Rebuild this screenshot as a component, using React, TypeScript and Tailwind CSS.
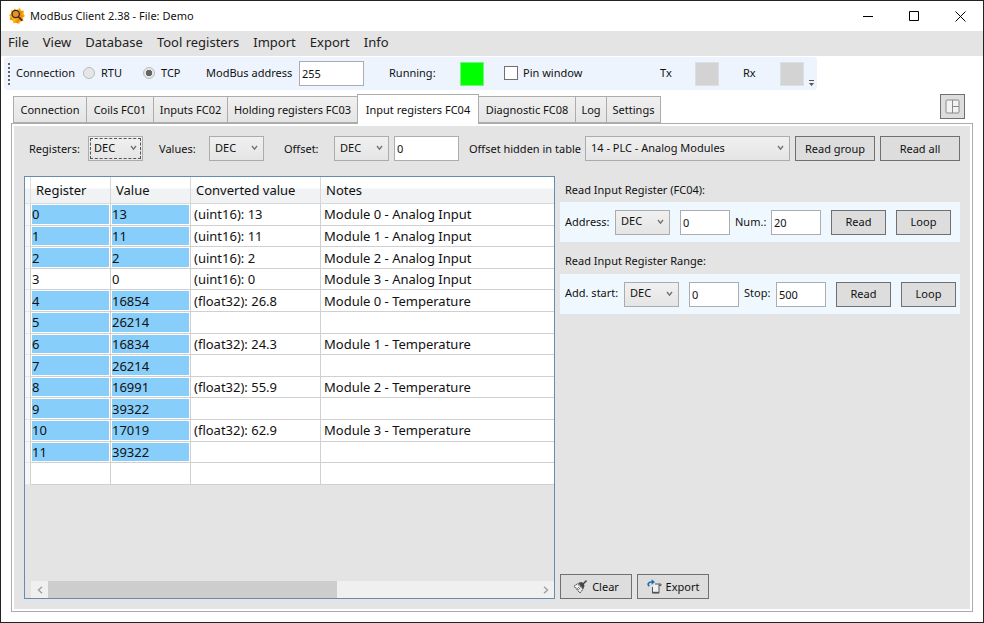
import type { ReactNode } from "react";

const MENU = ["File", "View", "Database", "Tool registers", "Import", "Export", "Info"];

const TABS = [
  { label: "Connection", width: "w-[74px]" },
  { label: "Coils FC01", width: "w-[68px]" },
  { label: "Inputs FC02", width: "w-[75px]" },
  { label: "Holding registers FC03", width: "w-[131px]" },
  { label: "Input registers FC04", width: "w-[122px]" },
  { label: "Diagnostic FC08", width: "w-[98px]" },
  { label: "Log", width: "w-[32px]" },
  { label: "Settings", width: "w-[55px]" },
];
const ACTIVE_TAB = "Input registers FC04";

type Row = { reg: string; value: string; converted?: string; notes?: string; changed: boolean };

const ROWS: Row[] = [
  { reg: "0", value: "13", converted: "(uint16): 13", notes: "Module 0 - Analog Input", changed: true },
  { reg: "1", value: "11", converted: "(uint16): 11", notes: "Module 1 - Analog Input", changed: true },
  { reg: "2", value: "2", converted: "(uint16): 2", notes: "Module 2 - Analog Input", changed: true },
  { reg: "3", value: "0", converted: "(uint16): 0", notes: "Module 3 - Analog Input", changed: false },
  { reg: "4", value: "16854", converted: "(float32): 26.8", notes: "Module 0 - Temperature", changed: true },
  { reg: "5", value: "26214", changed: true },
  { reg: "6", value: "16834", converted: "(float32): 24.3", notes: "Module 1 - Temperature", changed: true },
  { reg: "7", value: "26214", changed: true },
  { reg: "8", value: "16991", converted: "(float32): 55.9", notes: "Module 2 - Temperature", changed: true },
  { reg: "9", value: "39322", changed: true },
  { reg: "10", value: "17019", converted: "(float32): 62.9", notes: "Module 3 - Temperature", changed: true },
  { reg: "11", value: "39322", changed: true },
  { reg: "\u00a0", value: "", changed: false },
];

function Combo({ id, label, value, options, className = "w-[55px] shrink-0", focused = false }: {
  id: string; label?: string; value: string; options: string[]; className?: string; focused?: boolean;
}) {
  const ring = focused ? "outline outline-1 outline-dashed outline-[#555] -outline-offset-[3px]" : "outline-none";
  return (
    <div className={`relative h-[25px] ${className}`}>
      <select
        id={id}
        aria-label={label}
        defaultValue={value}
        className={`block h-full w-full appearance-none border border-[#acacac] bg-linear-to-b from-[#f0f0f0] to-[#e5e5e5] pb-0.5 pl-[5px] pr-4 ${ring}`}
      >
        {options.map((o) => <option key={o}>{o}</option>)}
      </select>
      <svg className="pointer-events-none absolute right-1.5 top-[9px]" width="7" height="6" viewBox="0 0 7 6" fill="none" stroke="#707070" strokeWidth="1.3">
        <path d="M1 1 3.5 4.2 6 1" />
      </svg>
    </div>
  );
}

function Field({ id, label, value, className = "w-[50px]" }: { id: string; label?: string; value: string; className?: string }) {
  return (
    <input
      id={id}
      aria-label={label}
      type="text"
      defaultValue={value}
      className={`h-[25px] shrink-0 border border-[#abadb3] bg-white px-0.5 outline-none ${className}`}
    />
  );
}

function Btn({ children, className = "w-[55px]" }: { children: ReactNode; className?: string }) {
  return (
    <button type="button" className={`flex h-[25px] shrink-0 items-center justify-center border border-[#707070] bg-[#dddddd] ${className}`}>
      {children}
    </button>
  );
}

function AppIcon() {
  return (
    <svg width="16" height="16" viewBox="0 0 16 16">
      <path fill="#fbb313" d="M5 .6 7.6 2 11 0l1 2.6 3 .2-.4 3L16 8l-2 1.800.6 3-3 .6L10 16l-2.400-1.400L4.500 15.600 3.800 12.600.6 12l1-2.800L0 7l2.300-1.600L2 2.300l2.800.2Z" />
      <path fill="#f58a0b" d="m10 .8 1 2 3 .4-1 3 2 2-2.500 1.500.5 3-3 .3-1.500 2.500L6 14l5-6ZM.8 9 3 10l1 2-3-.5Z" />
      <circle cx="6.700" cy="6" r="3.700" fill="#e8912b" stroke="#3a2c22" strokeWidth="1.300" />
      <path d="m9.300 8.600 4 4" stroke="#3a2c22" strokeWidth="1.600" />
    </svg>
  );
}

function BroomIcon() {
  return (
    <svg width="15" height="14" viewBox="0 0 15 14" fill="none" stroke="#454545">
      <path d="M1 6.200 4.300 3.800 10 9.200 7 13Z" fill="#f3f3f3" strokeWidth="1" strokeDasharray="2 .6" />
      <path d="M5 3 8.500 2l2.200 1.500.8 2.300-1.200 3.200Z" fill="#454545" stroke="none" />
      <path d="M10 4 13.500.6" strokeWidth="1.500" />
      <path d="m5.200 7.200 2 2M3.600 7.800l2.200 2.400" strokeWidth=".8" />
    </svg>
  );
}

function ExportIcon() {
  return (
    <svg width="15" height="15" viewBox="0 0 15 15" fill="none">
      <path d="M5.500 8V14h6.500V6.500h2v-1.500H8M12 6.500V5" fill="#f1f1f1" stroke="#555" strokeWidth="1" />
      <path d="M5 13.500h7" stroke="#555" strokeWidth="1.400" />
      <path d="M2.200 7.200C.4 5.500 1 2.800 5 3" stroke="#1f6cab" strokeWidth="1.700" />
      <path d="M4.600.3 8 3 4.600 5.800Z" fill="#1f6cab" />
    </svg>
  );
}

export default function App() {
  return (
    <div className="flex h-screen min-w-[960px] flex-col border border-[#222] bg-white font-['Noto_Sans','Open_Sans',sans-serif] text-[11px] leading-4 text-[#111]">
      <header className="flex h-[30px] shrink-0 items-center pl-2">
        <AppIcon />
        <h1 className="ml-[5px] flex-1">ModBus Client 2.38 - File: Demo</h1>
        <button type="button" aria-label="Minimize" className="flex h-full w-[46px] items-center justify-center">
          <svg width="11" height="11" stroke="#000"><path d="M0 5.500h10" /></svg>
        </button>
        <button type="button" aria-label="Maximize" className="flex h-full w-[46px] items-center justify-center">
          <svg width="11" height="11" stroke="#000" fill="none"><path d="M.5.5h9v9h-9Z" /></svg>
        </button>
        <button type="button" aria-label="Close" className="flex h-full w-[46px] items-center justify-center">
          <svg width="11" height="11" stroke="#000"><path d="m.5.5 10 10m0-10-10 10" /></svg>
        </button>
      </header>

      <nav className="flex h-[25px] shrink-0 items-center gap-3.5 bg-[#e4e4e4] px-[7px] pb-1 text-[13px] text-[#222]">
        {MENU.map((m) => <button type="button" key={m}>{m}</button>)}
      </nav>

      <div className="ml-[3px] mt-px flex h-[33px] w-[813px] shrink-0 items-center whitespace-nowrap rounded bg-[#edf4fd] pl-1">
        <div className="h-[22px] w-0.5 bg-[repeating-linear-gradient(to_bottom,#666_0_2px,transparent_2px_4px)]" />
        <span className="ml-1.5 w-[67px] pb-0.5">Connection</span>
        <label className="flex w-[60px] items-center gap-1.5 pb-0.5">
          <input type="radio" name="mode" className="size-3 appearance-none rounded-full border border-[#bcbcbc] bg-[#e6e6e6]" />
          RTU
        </label>
        <label className="flex w-[63px] items-center gap-1.5 pb-0.5">
          <input type="radio" name="mode" defaultChecked className="size-3 appearance-none rounded-full border border-[#bcbcbc] bg-[radial-gradient(circle,#666_0_3px,#e6e6e6_3.500px)]" />
          TCP
        </label>
        <label htmlFor="address" className="w-[93px] pb-0.5">ModBus address</label>
        <Field id="address" value="255" className="w-[65px]" />
        <span className="ml-[25px] w-[71px] pb-0.5">Running:</span>
        <div className="size-6 border border-[#7bf07b] bg-[#00ff00]" />
        <label className="ml-5 flex w-[136px] items-center gap-[5px] pb-0.5">
          <input type="checkbox" className="size-3.5 appearance-none border border-[#707070] bg-white" />
          Pin window
        </label>
        <span className="ml-5 w-[35px] pb-0.5">Tx</span>
        <div className="size-6 border border-[#dcdfe3] bg-[#d3d3d3]" />
        <span className="ml-6 w-[37px] pb-0.5">Rx</span>
        <div className="size-6 border border-[#dcdfe3] bg-[#d3d3d3]" />
        <svg className="mb-1 ml-[5px] self-end" width="5" height="6"><path d="M0 0h5v1H0ZM0 3h5L2.500 6Z" fill="#555" /></svg>
      </div>

      <div className="mx-3 mt-1 flex h-[29px] shrink-0 items-end whitespace-nowrap" role="tablist">
        {TABS.map((t) => {
          const active = t.label === ACTIVE_TAB;
          const look = active
            ? "z-10 h-[30px] -mb-px border-b-0 bg-white"
            : "h-[27px] bg-linear-to-b from-[#f0f0f0] to-[#e5e5e5]";
          return (
            <button type="button" role="tab" aria-selected={active} key={t.label}
              className={`-mr-px flex shrink-0 items-center justify-center border border-[#acacac] ${t.width} ${look}`}>
              {t.label}
            </button>
          );
        })}
        <button type="button" aria-label="Toggle layout" className="mb-1 ml-auto mr-1.5 flex size-[25px] items-center justify-center border border-[#707070] bg-[#dddddd]">
          <svg width="15" height="15" fill="#f2f2f2" stroke="#8a8a8a"><rect x="1" y="1" width="13" height="13" rx="1" /><path d="M7.500 1v13M7.500 7.500H14" /></svg>
        </button>
      </div>

      <main className="mx-2.5 mb-2.5 flex min-h-0 flex-1 border border-[#acacac] bg-white p-0.5">
        <div className="flex min-w-0 flex-1 flex-col bg-[#e4e4e4] p-2.5">
          <div className="flex items-center whitespace-nowrap">
            <label htmlFor="regs" className="w-16 pl-[5px]">Registers:</label>
            <Combo id="regs" value="DEC" options={["DEC", "HEX"]} focused />
            <label htmlFor="vals" className="ml-4 w-[50px]">Values:</label>
            <Combo id="vals" value="DEC" options={["DEC", "HEX"]} />
            <label htmlFor="offs" className="ml-5 w-[50px]">Offset:</label>
            <Combo id="offs" value="DEC" options={["DEC", "HEX"]} />
            <Field id="offset-value" label="Offset value" value="0" className="ml-[5px] w-[65px]" />
            <label htmlFor="group" className="ml-2.5 w-[116px] shrink-0">Offset hidden in table</label>
            <Combo id="group" value="14 - PLC - Analog Modules" options={["14 - PLC - Analog Modules"]} className="min-w-0 flex-1" />
            <Btn className="ml-[5px] w-20">Read group</Btn>
            <Btn className="ml-[5px] w-20">Read all</Btn>
          </div>

          <div className="mt-[15px] flex min-h-0 flex-1 gap-[5px]">
            <section className="flex min-w-0 flex-1 flex-col border border-[#688caf]">
              <div className="min-h-0 flex-1 overflow-hidden">
                <table className="h-[308px] w-full table-fixed border-separate border-spacing-0 whitespace-nowrap text-left text-[13px] leading-[18px]">
                  <colgroup>
                    <col className="w-1.5" />
                    <col className="w-20" />
                    <col className="w-20" />
                    <col className="w-[130px]" />
                    <col />
                  </colgroup>
                  <thead>
                    <tr className="h-[27px] bg-linear-to-b from-white from-40% to-[#f1f2f4] to-45%">
                      <th className="border-b border-r border-[#e0e0e0] p-0" />
                      <th className="border-b border-r border-[#d8d8d8] p-0 pl-[5px] font-normal">Register</th>
                      <th className="border-b border-r border-[#d8d8d8] p-0 pl-[5px] font-normal">Value</th>
                      <th className="border-b border-r border-[#d8d8d8] p-0 pl-[5px] font-normal">Converted value</th>
                      <th className="border-b border-[#d8d8d8] p-0 pl-[5px] font-normal">Notes</th>
                    </tr>
                  </thead>
                  <tbody>
                    {ROWS.map((r, i) => {
                      const fill = r.changed ? "bg-[#87cefa] shadow-[inset_0_0_0_1px_#fff]" : "bg-white";
                      return (
                        <tr key={i} className="bg-white">
                          <td className="border-b border-r border-b-[#e8e8e8] border-r-[#d0d0d0] bg-[#f7f7f8] p-0" />
                          <td className={`border-b border-r border-[#d0d0d0] p-0 pl-px ${fill}`}>{r.reg}</td>
                          <td className={`border-b border-r border-[#d0d0d0] p-0 pl-px ${fill}`}>{r.value}</td>
                          <td className="border-b border-r border-[#d0d0d0] p-0 pl-[3px]">{r.converted}</td>
                          <td className="border-b border-[#d0d0d0] p-0 pl-[3px]">{r.notes}</td>
                        </tr>
                      );
                    })}
                  </tbody>
                </table>
              </div>
              <div className="ml-1.5 flex h-[17px] shrink-0 bg-[#f0f0f0]">
                <button type="button" aria-label="Scroll left" className="flex w-[17px] items-center justify-center">
                  <svg width="6" height="8" fill="none" stroke="#a0a0a0" strokeWidth="1.400"><path d="M5 .7 1.500 4 5 7.300" /></svg>
                </button>
                <div className="flex-1"><div className="h-full w-[59%] bg-[#cdcdcd]" /></div>
                <button type="button" aria-label="Scroll right" className="flex w-[17px] items-center justify-center">
                  <svg width="6" height="8" fill="none" stroke="#a0a0a0" strokeWidth="1.400"><path d="M1 .7 4.500 4 1 7.300" /></svg>
                </button>
              </div>
            </section>

            <aside className="flex w-[400px] shrink-0 flex-col whitespace-nowrap">
              <h2 className="pl-[5px] pt-1.5">Read Input Register (FC04):</h2>
              <div className="mt-1 flex h-10 items-center bg-[#f0f8ff] pl-[5px]">
                <label htmlFor="addr-base" className="w-[50px]">Address:</label>
                <Combo id="addr-base" value="DEC" options={["DEC", "HEX"]} />
                <Field id="addr" label="Address" value="0" className="ml-2.5 w-[50px]" />
                <label htmlFor="num" className="ml-[5px] w-9">Num.:</label>
                <Field id="num" value="20" />
                <Btn className="ml-2.5 w-[55px]">Read</Btn>
                <Btn className="ml-2.5 w-[55px]">Loop</Btn>
              </div>
              <h2 className="mt-[11px] pl-[5px]">Read Input Register Range:</h2>
              <div className="mt-[5px] flex h-10 items-center bg-[#f0f8ff] pl-[5px]">
                <label htmlFor="start-base" className="w-[59px] pb-0.5">Add. start:</label>
                <Combo id="start-base" value="DEC" options={["DEC", "HEX"]} />
                <Field id="start" label="Start address" value="0" className="ml-2.5 w-[50px]" />
                <label htmlFor="stop" className="ml-[5px] w-8 pb-0.5">Stop:</label>
                <Field id="stop" value="500" />
                <Btn className="ml-2.5 w-[55px]">Read</Btn>
                <Btn className="ml-2.5 w-[55px]">Loop</Btn>
              </div>
              <div className="mt-auto flex gap-[5px]">
                <Btn className="w-[72px] gap-1"><BroomIcon />Clear</Btn>
                <Btn className="w-[72px] gap-1"><ExportIcon />Export</Btn>
              </div>
            </aside>
          </div>
        </div>
      </main>
    </div>
  );
}
